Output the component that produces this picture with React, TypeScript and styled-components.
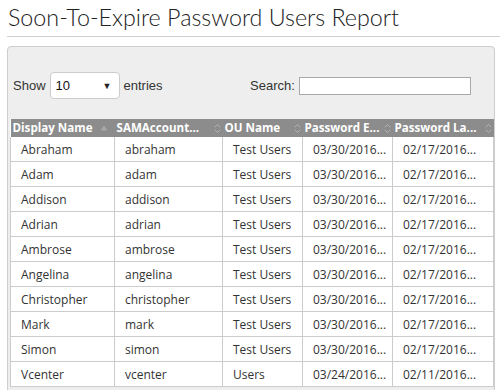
import styled, { createGlobalStyle } from "styled-components";

const GlobalStyle = createGlobalStyle`
  body {
    margin: 0;
    background: #fff;
    font-family: "Open Sans", "Liberation Sans", sans-serif;
    overflow: hidden;
  }
`;

const Page = styled.div`
  width: 500px;
  height: 390px;
  overflow: hidden;
`;

const TitleBar = styled.header`
  margin-left: 7px;
  border-bottom: 1px solid #cfcfcf;
  height: 37px;
  box-sizing: border-box;
`;

const Title = styled.h1`
  margin: 0;
  padding: 3px 0 0 1px;
  font-family: Lato, "Open Sans", sans-serif;
  font-weight: 300;
  font-size: 23.3px;
  line-height: 28px;
  color: #222;
  white-space: nowrap;
`;

const Panel = styled.section`
  margin: 9px 5px 0 7px;
  padding: 0 2px;
  border: 1px solid #cdcdcd;
  border-radius: 4px;
  background: #eeeeee;
  height: 400px;
`;

const Controls = styled.div`
  display: flex;
  align-items: center;
  box-sizing: border-box;
  height: 72px;
  padding: 5px 0 0 3px;
  font-family: "Liberation Sans", Arial, sans-serif;
  font-size: 13px;
  color: #333;
`;

const Length = styled.label`
  display: flex;
  align-items: center;
  gap: 4px;
  width: 237px;
`;

const SelectBox = styled.div`
  display: flex;
  align-items: center;
  justify-content: space-between;
  box-sizing: border-box;
  width: 70px;
  height: 27px;
  padding: 0 7px 0 5px;
  background: #fff;
  border: 1px solid #cccccc;
  border-radius: 4px;
  color: #111;
`;

const Arrow = styled.span`
  font-size: 9px;
  color: #222;
`;

const Search = styled.label`
  display: flex;
  align-items: center;
  gap: 4px;
`;

const SearchInput = styled.input`
  box-sizing: border-box;
  width: 172px;
  height: 18px;
  border: 1px solid #a9a9a9;
  padding: 0 2px;
  background: #fff;
`;

const Table = styled.table`
  width: 483px;
  border-collapse: collapse;
  table-layout: fixed;
  background: #fff;
`;

const Th = styled.th`
  height: 18px;
  padding: 0 2px 0 2px;
  background: #8c8c8c;
  color: #fff;
  font-weight: 700;
  font-size: 11.6px;
  text-align: left;
  white-space: nowrap;
  line-height: 18px;
  overflow: hidden;
`;

const ThInner = styled.div`
  display: flex;
  align-items: center;
  justify-content: space-between;
  gap: 2px;
`;

const Td = styled.td`
  height: 24px;
  padding: 0 10px;
  border: 1px solid #cccccc;
  border-top: none;
  font-size: 12px;
  color: #333;
  white-space: nowrap;
  overflow: hidden;
`;

const SortIcon = ({ asc }: { asc?: boolean }) =>
  asc ? (
    <svg width="8" height="6" viewBox="0 0 8 6" style={{ marginRight: 5, flexShrink: 0 }}>
      <path d="M4 0.5 L7.5 5.5 H0.5 Z" fill="#a8a8a8" />
    </svg>
  ) : (
    <svg width="7" height="11" viewBox="0 0 7 11" style={{ flexShrink: 0 }}>
      <path
        d="M0.8 4.2 L3.5 1.5 L6.2 4.2 M0.8 6.8 L3.5 9.5 L6.2 6.8"
        fill="none"
        stroke="#b4b4b4"
        strokeWidth="1"
      />
    </svg>
  );

const columns = [
  { label: "Display Name", width: 104, asc: true },
  { label: "SAMAccount...", width: 108 },
  { label: "OU Name", width: 80 },
  { label: "Password E...", width: 90 },
  { label: "Password La...", width: 101 },
];

const rows = [
  ["Abraham", "abraham", "Test Users", "03/30/2016...", "02/17/2016..."],
  ["Adam", "adam", "Test Users", "03/30/2016...", "02/17/2016..."],
  ["Addison", "addison", "Test Users", "03/30/2016...", "02/17/2016..."],
  ["Adrian", "adrian", "Test Users", "03/30/2016...", "02/17/2016..."],
  ["Ambrose", "ambrose", "Test Users", "03/30/2016...", "02/17/2016..."],
  ["Angelina", "angelina", "Test Users", "03/30/2016...", "02/17/2016..."],
  ["Christopher", "christopher", "Test Users", "03/30/2016...", "02/17/2016..."],
  ["Mark", "mark", "Test Users", "03/30/2016...", "02/17/2016..."],
  ["Simon", "simon", "Test Users", "03/30/2016...", "02/17/2016..."],
  ["Vcenter", "vcenter", "Users", "03/24/2016...", "02/11/2016..."],
];

export default function App() {
  return (
    <Page>
      <GlobalStyle />
      <TitleBar>
        <Title>Soon-To-Expire Password Users Report</Title>
      </TitleBar>
      <Panel>
        <Controls>
          <Length>
            Show
            <SelectBox>
              <span>10</span>
              <Arrow>▼</Arrow>
            </SelectBox>
            entries
          </Length>
          <Search>
            Search:
            <SearchInput type="text" />
          </Search>
        </Controls>
        <Table>
          <colgroup>
            {columns.map((c) => (
              <col key={c.label} style={{ width: c.width }} />
            ))}
          </colgroup>
          <thead>
            <tr>
              {columns.map((c) => (
                <Th key={c.label}>
                  <ThInner>
                    <span>{c.label}</span>
                    <SortIcon asc={c.asc} />
                  </ThInner>
                </Th>
              ))}
            </tr>
          </thead>
          <tbody>
            {rows.map((r) => (
              <tr key={r[0]}>
                {r.map((cell, i) => (
                  <Td key={i}>{cell}</Td>
                ))}
              </tr>
            ))}
          </tbody>
        </Table>
      </Panel>
    </Page>
  );
}
